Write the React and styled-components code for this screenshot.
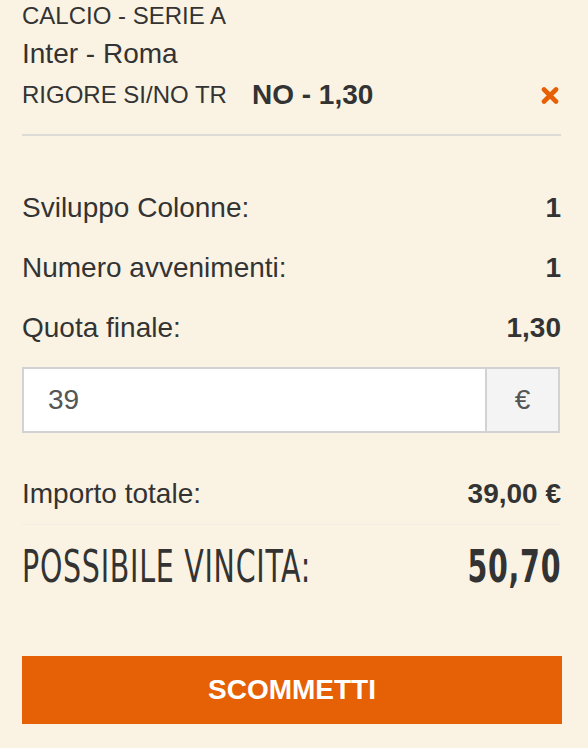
import React from 'react'
import styled, { createGlobalStyle } from 'styled-components'

const GlobalStyle = createGlobalStyle`
  html, body {
    margin: 0;
    padding: 0;
    background: #faf3e4;
  }
  body {
    font-family: "Liberation Sans", Arial, sans-serif;
    color: #333;
  }
`;

const SUMMARY = [
  { label: 'Sviluppo Colonne:', value: '1' },
  { label: 'Numero avvenimenti:', value: '1' },
  { label: 'Quota finale:', value: '1,30' },
];

const Slip = styled.div`
  width: 539px;
  padding: 0 27px 24px 22px;
`;
const Category = styled.div`
  font-size: 24px;
  line-height: 32px;
  text-transform: uppercase;
`;
const Match = styled.div`
  font-size: 28px;
  line-height: 44px;
`;
const Selection = styled.div`
  display: flex;
  align-items: center;
  height: 38px;
`;
const Market = styled.span`
  font-size: 24px;
`;
const Pick = styled.span`
  margin-left: 25px;
  font-size: 28px;
  font-weight: bold;
`;
const Remove = styled.button`
  margin-left: auto;
  margin-right: 2px;
  padding: 0;
  border: 0;
  background: none;
  display: flex;
  cursor: pointer;
`;
const Divider = styled.hr`
  margin: ${p => p.$faint ? 0 : '20px 0 0'};
  border: 0;
  border-top: ${p => p.$faint ? '1px solid #f3eee4' : '2px solid #dddbd6'};
`;
const Rows = styled.div`
  margin-top: 42px;
`;
const Row = styled.div`
  display: flex;
  align-items: center;
  justify-content: space-between;
  height: 60px;
  font-size: 28px;
`;
const Value = styled.span`
  font-weight: bold;
`;
const Stake = styled.div`
  display: flex;
  height: 66px;
  margin: 9px 1px 31px 0;
  border: 2px solid #d2d2d2;
  box-sizing: border-box;
`;
const StakeInput = styled.input`
  flex: 1;
  min-width: 0;
  border: 0;
  outline: none;
  padding: 0 0 0 24px;
  font-family: "Liberation Sans", Arial, sans-serif;
  font-size: 28px;
  color: #555;
  background: #fff;
`;
const Addon = styled.div`
  width: 71px;
  display: flex;
  align-items: center;
  justify-content: center;
  border-left: 2px solid #d2d2d2;
  background: #f4f4f4;
  font-size: 28px;
  color: #555;
`;
const Win = styled.div`
  display: flex;
  align-items: center;
  justify-content: space-between;
  height: 82px;
  font-family: "DejaVu Sans Condensed", "Liberation Sans Narrow", sans-serif;
  font-stretch: condensed;
  color: #333;
`;
const WinText = styled.span`
  display: inline-block;
  font-size: 44px;
  font-weight: ${p => p.$bold ? 'bold' : 'normal'};
  letter-spacing: 1px;
  transform: scaleX(0.72);
  transform-origin: ${p => p.$bold ? 'right' : 'left'} center;
`;
const Submit = styled.button`
  display: block;
  width: 540px;
  height: 68px;
  margin-top: 49px;
  border: 0;
  background: #e66005;
  color: #fff;
  font-family: "Liberation Sans", Arial, sans-serif;
  font-size: 28px;
  font-weight: bold;
  cursor: pointer;
`;

const CloseIcon = () => (
  <svg width="18" height="17" viewBox="0 0 18 17">
    <path d="M3 2.5 L15 14.5 M15 2.5 L3 14.5" stroke="#e66005" strokeWidth="4.6" strokeLinecap="round" />
  </svg>
);

export default function App() {
  return (
    <>
      <GlobalStyle />
      <Slip>
        <Category>CALCIO - SERIE A</Category>
        <Match>Inter - Roma</Match>
        <Selection>
          <Market>RIGORE SI/NO TR</Market>
          <Pick>NO - 1,30</Pick>
          <Remove aria-label="Rimuovi"><CloseIcon /></Remove>
        </Selection>
        <Divider />
        <Rows>
          {SUMMARY.map(item => (
            <Row key={item.label}>
              <span>{item.label}</span>
              <Value>{item.value}</Value>
            </Row>
          ))}
        </Rows>
        <Stake>
          <StakeInput defaultValue="39" />
          <Addon>€</Addon>
        </Stake>
        <Row>
          <span>Importo totale:</span>
          <Value>39,00 €</Value>
        </Row>
        <Divider $faint />
        <Win>
          <WinText>POSSIBILE VINCITA:</WinText>
          <WinText $bold>50,70</WinText>
        </Win>
        <Submit>SCOMMETTI</Submit>
      </Slip>
    </>
  )
}
